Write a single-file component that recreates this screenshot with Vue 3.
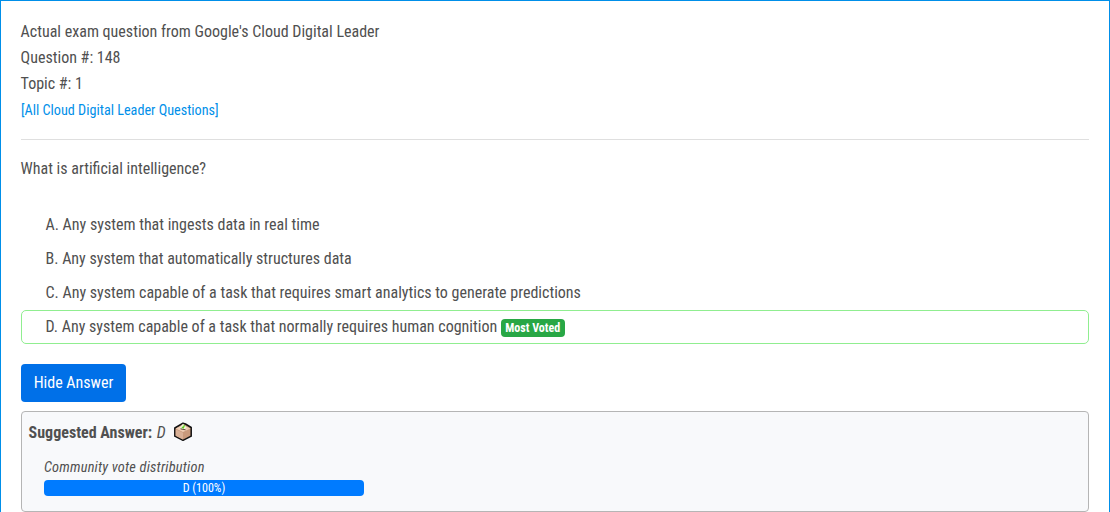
<script setup>
const choices = [
  { letter: 'A', text: 'Any system that ingests data in real time' },
  { letter: 'B', text: 'Any system that automatically structures data' },
  { letter: 'C', text: 'Any system capable of a task that requires smart analytics to generate predictions' },
  { letter: 'D', text: 'Any system capable of a task that normally requires human cognition', voted: true },
]
</script>

<template>
  <main class="card">
    <header class="intro">
      <div>Actual exam question from Google's Cloud Digital Leader</div>
      <div>Question #: 148</div>
      <div>Topic #: 1</div>
      <a class="link">[All Cloud Digital Leader Questions]</a>
    </header>
    <p class="question">What is artificial intelligence?</p>
    <ul class="choices">
      <li v-for="c in choices" :key="c.letter" :class="{ voted: c.voted }">
        <span>{{ c.letter }}. {{ c.text }}</span>
        <span v-if="c.voted" class="badge">Most Voted</span>
      </li>
    </ul>
    <button class="btn">Hide Answer</button>
    <section class="answer">
      <div class="suggested">
        <strong>Suggested Answer:</strong>
        <em>D</em>
        <svg class="box" width="20" height="20" viewBox="0 0 20 20">
          <path d="M10 1.200 12.500 2 18.200 5.500v8.700L10 18.300l-8.200-4.100V6z" fill="#c99a7c" stroke="#111" stroke-width="1.500" stroke-linejoin="round" />
          <path d="M10 3 17.300 6.400 10 10 2.700 6.400z" fill="#efcdb4" />
          <path d="M2.700 7.200 10 10.700V17.400l-7.300-3.600z" fill="#d9b096" />
          <path d="M6.500 6.300 10 1.700l3.500 3.800-2.500 2.500z" fill="#eef7d8" />
          <path d="M8.800 5 10.300 5.800 11.500 3" fill="none" stroke="#62cc20" stroke-width="1.300" />
          <path d="M7.500 6.800 12.500 7.800" stroke="#5b4031" />
        </svg>
      </div>
      <div class="distribution">
        <em>Community vote distribution</em>
        <div class="bar">D (100%)</div>
      </div>
    </section>
  </main>
</template>

<style>
body { background: #fff; }
</style>
<style scoped>
.card {
  box-sizing: border-box;
  height: 512px;
  overflow: hidden;
  border: 1px solid #008fe9;
  border-bottom: 0;
  padding: 18px 20px 0;
  font-family: "Roboto Condensed", Roboto, sans-serif;
  font-stretch: 75%;
  font-size: 16px;
  line-height: 26px;
  color: #505050;
}
.intro { height: 120px; border-bottom: 1px solid #dfdfdf; }
.intro div, .question { text-indent: -0.4px; }
.link { display: block; font-size: 14.2px; line-height: 27px; color: #008fe9; }
.question { margin: 16px 0 26px; }
.choices { list-style: none; margin: 0; padding: 0; }
.choices li {
  box-sizing: border-box;
  height: 34px;
  display: flex;
  align-items: center;
  gap: 3.5px;
  padding-left: 23.5px;
  border: 1px solid transparent;
  border-radius: 5px;
}
.choices .voted { border-color: #90ee90; }
.badge {
  height: 18px;
  padding: 0 4.5px;
  margin-top: 2px;
  border-radius: 4px;
  background: #28a745;
  color: #fff;
  font-size: 12px;
  font-weight: 700;
  line-height: 18px;
}
.btn {
  display: block;
  width: 105px;
  height: 38px;
  margin: 20px 0 9px;
  padding: 0;
  border: 0;
  border-radius: 4px;
  background: #0070e8;
  color: #fff;
  font: inherit;
}
.answer {
  box-sizing: border-box;
  height: 101px;
  border: 1px solid #b5b5b5;
  border-radius: 4px;
  background: #f8f9fb;
  padding: 8px 7px 0;
}
.suggested { display: flex; align-items: center; height: 26px; gap: 5px; text-indent: -0.4px; }
.box { margin: 0 0 2px 2.5px; }
.distribution { width: 320px; margin: 10px 0 0 15px; font-size: 14.4px; line-height: 24px; }
.distribution em { display: block; letter-spacing: 0.19px; }
.bar {
  height: 16px;
  border-radius: 4px;
  background: #007bff;
  color: #fff;
  font-size: 12px;
  line-height: 16px;
  text-align: center;
}
</style>
